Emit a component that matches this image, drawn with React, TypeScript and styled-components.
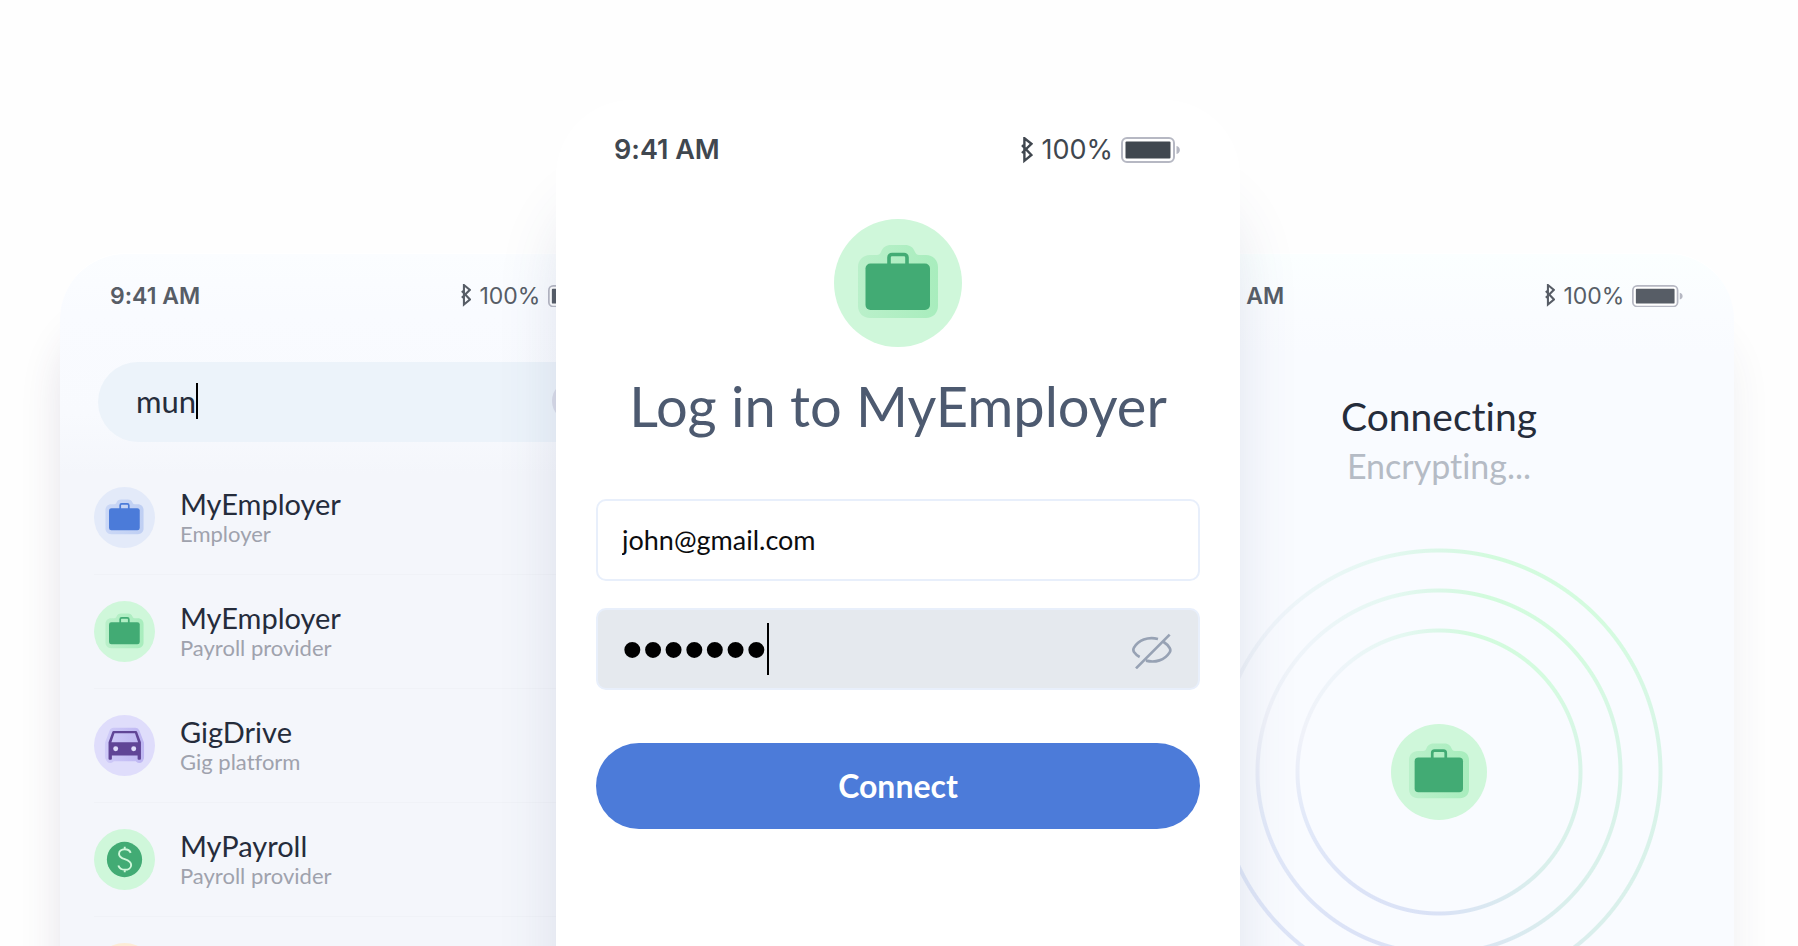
import React, { useId, useState } from 'react';
import styled, { createGlobalStyle, css } from 'styled-components';

const GlobalStyle = createGlobalStyle`
  *, *::before, *::after { box-sizing: border-box; }
  body {
    margin: 0;
    background: #fefefe;
    font-family: Lato, 'Liberation Sans', sans-serif;
    font-variant-ligatures: none;
  }
`;

const Stage = styled.main`
  display: flex;
  justify-content: center;
  height: 100vh;
  padding: 0 64px 0 60px;
  overflow: hidden;
`;

const phoneBase = css`
  display: flex;
  flex-direction: column;
  min-width: 0;
`;

const SidePhone = styled.section<{ $tone: 'list' | 'plain' }>`
  ${phoneBase}
  flex: 1 1 590px;
  margin-top: 253px;
  padding: 26px 38px 0;
  border-top: 1px solid #fff;
  border-radius: 66px 66px 0 0;
  background: ${({ $tone }) =>
    $tone === 'list'
      ? 'linear-gradient(#fbfdff 0, #f9fbff 60px, #f8fafe 160px, #f4f6fb 220px)'
      : 'linear-gradient(#fbffff 0, #fafcff 60px, #f9fbff 100px)'};
  box-shadow: ${({ $tone }) =>
    $tone === 'list'
      ? '0 70px 40px rgba(60, 50, 90, 0.13)'
      : '0 70px 40px rgba(60, 60, 90, 0.07)'};
`;

const CenterPhone = styled.section`
  ${phoneBase}
  position: relative;
  z-index: 1;
  flex: 1 1 684px;
  margin: 100px -96px 0 -94px;
  padding: 34px 40px 0;
  border-radius: 76px 76px 0 0;
  background: #fff;
  box-shadow: 0 96px 60px rgba(60, 75, 120, 0.13);
`;

const StatusBar = styled.header<{ $large?: boolean }>`
  display: flex;
  align-items: center;
  justify-content: space-between;
  height: 32px;
  flex: none;
  padding: ${({ $large }) => ($large ? '0 19px 0 18px' : '0 12px')};
  color: ${({ $large }) => ($large ? '#40474f' : '#575d66')};
  font-family: Inter, 'Liberation Sans', sans-serif;
  font-size: ${({ $large }) => ($large ? 27 : 23)}px;
  line-height: 32px;
  white-space: nowrap;
`;

const Time = styled.time`
  font-weight: 600;
`;

const StatusGroup = styled.div`
  display: flex;
  align-items: center;
  gap: 8px;
`;

function Status({ large }: { large?: boolean }) {
  const k = large ? 1 : 0.86;
  return (
    <StatusBar $large={large}>
      <Time>9:41 AM</Time>
      <StatusGroup>
        <svg width={12 * k} height={27 * k} viewBox="0 1 12 27" fill="none" stroke="currentColor" strokeWidth="2.4" aria-hidden="true">
          <path d="M1 9.2 10.4 19 3.4 24.8V2.2L10.4 7.8 1 17" />
        </svg>
        <span>100%</span>
        <svg width={60 * k} height={26 * k} viewBox="0 0 60 26" aria-hidden="true">
          <rect x="1" y="1" width="52" height="24" rx="5" fill="#fff" stroke="#b6b8c3" strokeWidth="2" />
          <rect x="4.5" y="4.5" width="45" height="17" rx="1" fill="currentColor" />
          <path d="M55.5 9c4.5 1 4.5 7 0 8z" fill="#b6b8c3" />
        </svg>
      </StatusGroup>
    </StatusBar>
  );
}

type Kind = 'employer' | 'payroll' | 'gig' | 'money' | 'other';

const palette: Record<Kind, { disc: string; from: string; to: string; mark: string }> = {
  employer: { disc: '#e3eaf9', from: '#cbd8f6', to: '#bfcff3', mark: '#4b7bd9' },
  payroll: { disc: '#cff7da', from: '#baf0ca', to: '#a8edbd', mark: '#42ab74' },
  gig: { disc: '#dfddfb', from: '#cfcbf8', to: '#beb6f2', mark: '#604596' },
  money: { disc: '#cff7da', from: '#baf0ca', to: '#a8edbd', mark: '#42ab74' },
  other: { disc: '#fdecd6', from: '#fdecd6', to: '#fdecd6', mark: '#fdecd6' },
};

const BadgeSvg = styled.svg`
  display: block;
  flex: none;
`;

function Badge({ kind, size }: { kind: Kind; size: number }) {
  const id = useId();
  const { disc, from, to, mark } = palette[kind];
  const halo = `url(#${id})`;
  return (
    <BadgeSvg width={size} height={size} viewBox="0 0 128 128" aria-hidden="true">
      <defs>
        <linearGradient id={id} gradientUnits="userSpaceOnUse" x1="24" y1="0" x2="104" y2="0">
          <stop offset="0" stopColor={from} />
          <stop offset="1" stopColor={to} />
        </linearGradient>
      </defs>
      <circle cx="64" cy="64" r="64" fill={disc} />
      {(kind === 'employer' || kind === 'payroll') && (
        <>
          <path
            fill={halo}
            d="M36 36h7c2 0 3-1 4-3 2-5 5-7 10-7h14c5 0 8 2 10 7 1 2 2 3 4 3h7c7 0 12 5 12 12v39c0 7-5 12-12 12H36c-7 0-12-5-12-12V48c0-7 5-12 12-12z"
          />
          <rect x="31.5" y="44.5" width="64.5" height="46.5" rx="5" fill={mark} />
          <path d="M55 46v-7.500a3 3 0 0 1 3-3h12a3 3 0 0 1 3 3V46" fill="none" stroke={mark} strokeWidth="3.6" />
        </>
      )}
      {kind === 'gig' && (
        <>
          <path d="M41 36h46l9 24v28H32V60z" fill={halo} stroke={halo} strokeWidth="18" strokeLinejoin="round" />
          <path d="M34 60v31.500M95 60l.1 31.500" fill="none" stroke={halo} strokeWidth="18" strokeLinecap="round" />
          <path
            fill={mark}
            fillRule="evenodd"
            d="M41 33.500h47c1 0 2 .5 2.400 1.600L98.500 57v35a2 2 0 0 1-2 2h-3a2 2 0 0 1-2-2v-7h-54v7a2 2 0 0 1-2 2h-3a2 2 0 0 1-2-2V57l8-21.900c.5-1.100 1.400-1.600 2.500-1.600zM43 38.500 36.500 57h56L86 38.500z"
          />
          <circle cx="45.500" cy="70.700" r="5.200" fill={disc} />
          <circle cx="83.300" cy="70.700" r="5.200" fill={disc} />
        </>
      )}
      {kind === 'money' && (
        <>
          <circle cx="64" cy="64" r="37" fill={mark} />
          <path
            d="M77 50c-2-5-7-7.500-12.500-7.500-7 0-12 4-12 9.800 0 6 5 8.500 12 11 8 2.800 13.500 5.500 13.500 12 0 6.200-5.500 10.200-13 10.200-6.500 0-12-3.500-14-9M64.500 37v5.500M64.500 85.500V91"
            fill="none"
            stroke={disc}
            strokeWidth="4"
          />
        </>
      )}
    </BadgeSvg>
  );
}

const SearchBox = styled.label`
  display: flex;
  align-items: center;
  flex: none;
  height: 80px;
  margin-top: 50px;
  padding: 0 20px 3px 38px;
  border-radius: 40px;
  background: #ecf3fa;
`;

const SearchInput = styled.input`
  field-sizing: content;
  max-width: 360px;
  padding: 0;
  border: 0;
  outline: 0;
  background: transparent;
  color: #262d3b;
  font: 400 31px/40px Lato, 'Liberation Sans', sans-serif;
`;

const Caret = styled.span<{ $height: number }>`
  flex: none;
  width: 2px;
  height: ${({ $height }) => $height}px;
  background: #000;
`;

const ClearButton = styled.button`
  width: 40px;
  height: 40px;
  margin-left: auto;
  padding: 0;
  border: 0;
  border-radius: 50%;
  background: #d9dbe8;
`;

const ProviderList = styled.ul`
  margin: 19px -4px 0;
  padding: 0;
  list-style: none;
`;

const ProviderRow = styled.li`
  display: flex;
  align-items: center;
  gap: 25px;
  height: 114px;
  border-bottom: 1px solid #f0f2f7;
`;

const ProviderText = styled.div`
  padding-bottom: 2px;
`;

const ProviderName = styled.div`
  color: #252c3b;
  font-size: 29px;
  line-height: 34px;
`;

const ProviderType = styled.div`
  color: #9fa2ad;
  font-size: 22px;
  line-height: 26px;
`;

const providers: { kind: Kind; name?: string; type?: string }[] = [
  { kind: 'employer', name: 'MyEmployer', type: 'Employer' },
  { kind: 'payroll', name: 'MyEmployer', type: 'Payroll provider' },
  { kind: 'gig', name: 'GigDrive', type: 'Gig platform' },
  { kind: 'money', name: 'MyPayroll', type: 'Payroll provider' },
  { kind: 'other' },
];

function SearchPhone() {
  const [query, setQuery] = useState('mun');
  return (
    <SidePhone $tone="list">
      <Status />
      <SearchBox>
        <SearchInput aria-label="Search" value={query} onChange={(e) => setQuery(e.target.value)} />
        <Caret $height={36} />
        <ClearButton type="button" aria-label="Clear search" onClick={() => setQuery('')} />
      </SearchBox>
      <ProviderList>
        {providers.map(({ kind, name, type }) => (
          <ProviderRow key={kind}>
            <Badge kind={kind} size={61} />
            {name && (
              <ProviderText>
                <ProviderName>{name}</ProviderName>
                <ProviderType>{type}</ProviderType>
              </ProviderText>
            )}
          </ProviderRow>
        ))}
      </ProviderList>
    </SidePhone>
  );
}

const LoginForm = styled.form`
  display: flex;
  flex-direction: column;
  align-items: center;
  margin-top: 53px;
`;

const Title = styled.h1`
  margin: 27px 0 61px;
  color: #4d5a70;
  font-size: 56px;
  font-weight: 400;
  line-height: 64px;
  white-space: nowrap;
`;

const Field = styled.label<{ $active?: boolean }>`
  display: flex;
  align-items: center;
  width: 100%;
  height: 82px;
  margin-bottom: 27px;
  padding: 0 24px;
  border: 2px solid #e8effb;
  border-radius: 10px;
  background: ${({ $active }) => ($active ? '#e5e9ee' : '#fff')};
`;

const EmailInput = styled.input`
  width: 100%;
  padding: 0;
  border: 0;
  outline: 0;
  background: transparent;
  color: #0b0c0e;
  font: 400 27px/40px Lato, 'Liberation Sans', sans-serif;
`;

const PasswordInput = styled.input`
  field-sizing: content;
  max-width: 480px;
  height: 66px;
  padding: 2px 0 0;
  border: 0;
  outline: 0;
  background: transparent;
  color: #000;
  font: 400 59px/64px 'Liberation Sans', sans-serif;
`;

const RevealButton = styled.button`
  width: 44px;
  height: 40px;
  margin-left: auto;
  padding: 0;
  border: 0;
  background: transparent;
  color: #97a2b4;
`;

const ConnectButton = styled.button`
  width: 100%;
  height: 86px;
  margin-top: 26px;
  border: 0;
  border-radius: 43px;
  background: #4c7bd9;
  color: #fff;
  font: 700 32px/40px Lato, 'Liberation Sans', sans-serif;
`;

function LoginPhone() {
  const [email, setEmail] = useState('john@gmail.com');
  const [password, setPassword] = useState('1234567');
  const [shown, setShown] = useState(false);
  return (
    <CenterPhone>
      <Status large />
      <LoginForm onSubmit={(e) => e.preventDefault()}>
        <Badge kind="payroll" size={128} />
        <Title>Log in to MyEmployer</Title>
        <Field>
          <EmailInput type="email" aria-label="Email" value={email} onChange={(e) => setEmail(e.target.value)} />
        </Field>
        <Field $active>
          <PasswordInput
            type={shown ? 'text' : 'password'}
            aria-label="Password"
            value={password}
            onChange={(e) => setPassword(e.target.value)}
          />
          <Caret $height={52} />
          <RevealButton type="button" aria-label="Show password" onClick={() => setShown(!shown)}>
            <svg width="44" height="40" viewBox="29 28 132 120" fill="none" stroke="currentColor" strokeWidth="8">
              <path d="M47 146 148 45M113 58C82 50 54 62 41 84c-3 5-3 8 0 13 5 7 11 12 17 15M130 67c8 5 14 11 18 18 3 5 3 8 0 13-15 24-43 32-71 25" />
            </svg>
          </RevealButton>
        </Field>
        <ConnectButton type="submit">Connect</ConnectButton>
      </LoginForm>
    </CenterPhone>
  );
}

const Progress = styled.div`
  display: flex;
  flex-direction: column;
  align-items: center;
  margin-top: 80px;
`;

const ProgressTitle = styled.h2`
  margin: 0 0 2px;
  color: #252c3b;
  font-size: 39px;
  font-weight: 400;
  line-height: 48px;
`;

const ProgressStep = styled.p`
  margin: 0;
  color: #b5bbc5;
  font-size: 34px;
  line-height: 48px;
`;

const RingArea = styled.div`
  display: grid;
  place-items: center;
  flex: none;
  width: 448px;
  height: 448px;
  margin-top: 58px;

  > * {
    grid-area: 1 / 1;
  }
`;

const Rings = styled.div`
  width: 100%;
  height: 100%;
  background: conic-gradient(
    #dbf7e8 0deg,
    #d2fbdd 14deg,
    #d5fbe0 50deg,
    #d9f5e8 85deg,
    #daefec 135deg,
    #dae8f1 160deg,
    #dae2f6 180deg,
    #dce3f7 215deg,
    #e2e9f9 250deg,
    #f0f2f9 285deg,
    #eff5fa 315deg,
    #e5f8f2 345deg,
    #dbf7e8 360deg
  );
  mask-image: radial-gradient(
    circle closest-side,
    transparent 139px, #000 140px, #000 143px, transparent 144px,
    transparent 179px, #000 180px, #000 183px, transparent 184px,
    transparent 219px, #000 220px, #000 223px, transparent 224px
  );
`;

function ConnectingPhone() {
  return (
    <SidePhone $tone="plain">
      <Status />
      <Progress>
        <ProgressTitle>Connecting</ProgressTitle>
        <ProgressStep>Encrypting...</ProgressStep>
        <RingArea>
          <Rings />
          <Badge kind="payroll" size={96} />
        </RingArea>
      </Progress>
    </SidePhone>
  );
}

export default function App() {
  return (
    <>
      <GlobalStyle />
      <Stage>
        <SearchPhone />
        <LoginPhone />
        <ConnectingPhone />
      </Stage>
    </>
  );
}
